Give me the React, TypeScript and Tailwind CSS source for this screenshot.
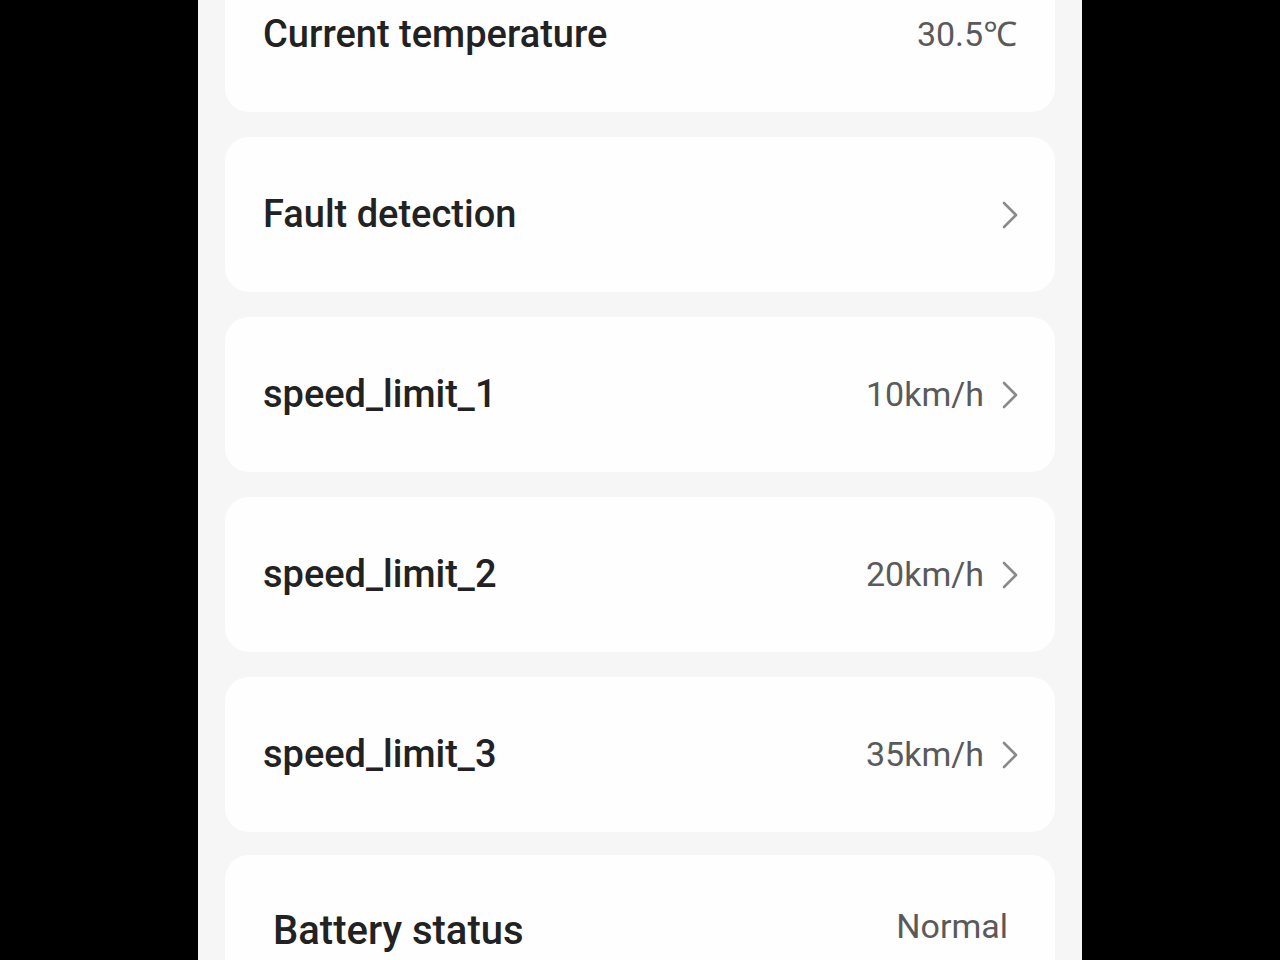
import React from "react";

function Chevron() {
  return (
    <svg width="20" height="32" viewBox="0 0 20 32" fill="none" className="shrink-0">
      <path d="M4 4 L16 16 L4 28" stroke="#8a8a8a" strokeWidth="2.6" strokeLinecap="round" strokeLinejoin="round" />
    </svg>
  );
}

type Row = { label: string; value?: string; chevron?: boolean };

const rows: Row[] = [
  { label: "Current temperature", value: "30.5℃" },
  { label: "Fault detection", chevron: true },
  { label: "speed_limit_1", value: "10km/h", chevron: true },
  { label: "speed_limit_2", value: "20km/h", chevron: true },
  { label: "speed_limit_3", value: "35km/h", chevron: true },
];

export default function App() {
  return (
    <div className="w-full h-[960px] bg-black flex justify-center overflow-hidden" style={{ fontFamily: "Roboto, 'Noto Sans', sans-serif" }}>
      <div className="w-[884px] h-full bg-[#f6f6f6] px-[27px] overflow-hidden">
        <div className="flex flex-col gap-[25px] -mt-[43px]">
          {rows.map((r) => (
            <div key={r.label} className="h-[155px] shrink-0 rounded-[24px] bg-[#fefefe] flex items-center justify-between pl-[38px] pr-[35px]">
              <span className="text-[38px] font-medium text-[#222222]">{r.label}</span>
              <div className="flex items-center gap-[16px]">
                {r.value && (
                  <span className={"text-[34px] text-[#5a5a5a] " + (r.chevron ? "" : "mr-[3px]")}>{r.value}</span>
                )}
                {r.chevron && <Chevron />}
              </div>
            </div>
          ))}
          <div className="h-[155px] shrink-0 rounded-[24px] bg-[#fefefe] flex items-center justify-between pl-[48px] pr-[47px] -mt-[2px]">
            <span className="text-[40px] font-medium text-[#222222] -mt-[4px]">Battery status</span>
            <span className="text-[34px] text-[#5a5a5a] -mt-[12px]">Normal</span>
          </div>
        </div>
      </div>
    </div>
  );
}
